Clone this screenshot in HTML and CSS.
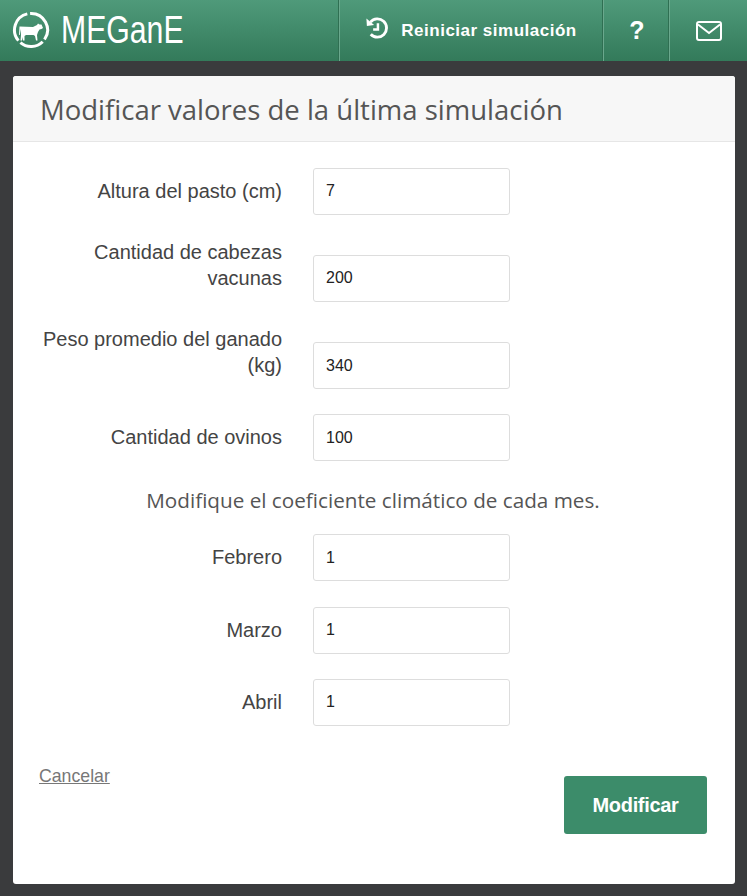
FILE: index.html
```html
<!DOCTYPE html>
<html lang="es">
<head>
<meta charset="utf-8">
<title>MEGanE</title>
<link rel="stylesheet" href="styles.css">
</head>
<body>
<header class="topbar">
  <a class="brand" href="#">
    <svg class="brand-icon" viewBox="0 0 38 38" aria-hidden="true">
      <g fill="none" stroke="#fff" stroke-width="3">
        <path d="M18.1 2.5A16.5 16.5 0 0 1 32.5 28.5"/>
        <path d="M30.7 30.7A16.5 16.5 0 0 1 8.4 31.6"/>
        <path d="M6.4 29.6A16.5 16.5 0 0 1 15.3 2.9"/>
      </g>
      <path fill="#fff" d="M7.5 15.5 21 16 25 14 26 12.5 27.5 13.5 29.5 13.5 31 17 29.5 18 27.5 18.5 26 21 25 24 25.5 29.5 24 29.5 23 25 21.5 24 14 24 12.5 25 12.5 29.5 11 29.5 10.5 26 10 29.5 8.5 29.5 9 24 8.5 18 7.8 24 7 24z"/>
    </svg>
    <span class="brand-name">MEGanE</span>
  </a>
  <nav class="topnav">
    <a class="nav-item nav-restart" href="#">
      <svg class="icon-history" viewBox="0 0 24 24" aria-hidden="true">
        <path d="M5.7 6.4A9.5 9.5 0 1 1 6 19" fill="none" stroke="#fff" stroke-width="3"/>
        <path d="M1.5 2.5 2 10.5 9.5 9.5z" fill="#fff"/>
        <path d="M13.5 7.5v6.5H8.5" fill="none" stroke="#fff" stroke-width="2.6"/>
      </svg>
      <span>Reiniciar simulación</span>
    </a>
    <a class="nav-item nav-help" href="#">?</a>
    <a class="nav-item nav-mail" href="#" aria-label="Contacto">
      <svg class="icon-mail" viewBox="0 0 26 20" aria-hidden="true">
        <rect x="1" y="1" width="24" height="18" rx="2" fill="none" stroke="#fff" stroke-width="2"/>
        <path d="M2 3.5 13 12 24 3.5" fill="none" stroke="#fff" stroke-width="2"/>
      </svg>
    </a>
  </nav>
</header>

<main class="card">
  <h1 class="card-title">Modificar valores de la última simulación</h1>
  <form class="card-body">
    <div class="field"><label class="field-label">Altura del pasto (cm)</label><input class="field-input" value="7"></div>
    <div class="field"><label class="field-label">Cantidad de cabezas vacunas</label><input class="field-input" value="200"></div>
    <div class="field"><label class="field-label">Peso promedio del ganado (kg)</label><input class="field-input" value="340"></div>
    <div class="field"><label class="field-label">Cantidad de ovinos</label><input class="field-input" value="100"></div>
    <p class="hint">Modifique el coeficiente climático de cada mes.</p>
    <div class="field"><label class="field-label">Febrero</label><input class="field-input" value="1"></div>
    <div class="field"><label class="field-label">Marzo</label><input class="field-input" value="1"></div>
    <div class="field"><label class="field-label">Abril</label><input class="field-input" value="1"></div>
    <div class="actions">
      <a class="cancel" href="#">Cancelar</a>
      <button class="submit" type="button">Modificar</button>
    </div>
  </form>
</main>
</body>
</html>
```
FILE: styles.css
```css
* { box-sizing: border-box; }
html, body { height: 100%; }
body {
  margin: 0;
  background: #3a3b3d;
  font-family: "Liberation Sans", Arial, sans-serif;
  color: #444;
  overflow: hidden;
}
.topbar {
  display: flex;
  justify-content: space-between;
  height: 61px;
  background: linear-gradient(#4f9a7a, #337a5a);
}
.brand {
  display: flex;
  align-items: center;
  gap: 11px;
  padding: 0 0 2px 12px;
  color: #fff;
  text-decoration: none;
}
.brand-icon { width: 38px; height: 38px; }
.brand-name {
  font-size: 38px;
  line-height: 1;
  transform: scaleX(.795);
  transform-origin: left center;
}
.topnav { display: flex; }
.nav-item {
  display: flex;
  align-items: center;
  justify-content: center;
  height: 61px;
  color: #fff;
  text-decoration: none;
  font-weight: 700;
  border-left: 1px solid #2f6f52;
  box-shadow: inset 1px 0 0 #6aa88d;
}
.nav-restart {
  width: 264px;
  gap: 13px;
  padding-left: 1px;
  font-size: 17px;
  letter-spacing: .5px;
}
.nav-help { width: 66px; padding-left: 3px; font-size: 25px; }
.nav-mail { width: 79px; padding-left: 2px; }
.icon-history { width: 23px; height: 23px; margin-top: -6px; }
.icon-mail { width: 26px; height: 20px; }
.card {
  margin: 15px 12px 0 13px;
  height: 808px;
  background: #fff;
  border-radius: 3px;
  overflow: hidden;
}
.card-title {
  margin: 0;
  height: 66px;
  padding: 0 27px;
  background: #f7f7f7;
  border-bottom: 1px solid #e6e6e6;
  font-family: "Open Sans", sans-serif;
  font-size: 27.5px;
  font-weight: 400;
  line-height: 68px;
  color: #555;
}
.card-body {
  display: flex;
  flex-direction: column;
  padding: 25.8px 0 0 0;
}
.field {
  display: flex;
  align-items: flex-end;
  margin-bottom: 25.2px;
}
.field-label {
  width: 269px;
  margin-top: -1px;
  padding: 0 0 11px 26px;
  text-align: right;
  font-size: 20px;
  line-height: 26px;
  color: #444;
}
.field-input {
  width: 197px;
  height: 47px;
  margin-left: 31px;
  padding: 0 12px;
  border: 1px solid #ddd;
  border-radius: 3px;
  background: #fff;
  font-family: "Liberation Sans", sans-serif;
  font-size: 16px;
  color: #222;
}
.hint {
  margin: .6px 0 21.2px;
  padding-right: 2px;
  text-align: center;
  font-family: "Open Sans", sans-serif;
  font-size: 20.7px;
  line-height: 26px;
  color: #555;
}
.actions {
  display: flex;
  justify-content: space-between;
  align-items: flex-start;
  padding: 0 28px 0 26px;
}
.cancel {
  font-size: 17.7px;
  line-height: 20px;
  color: #777;
  margin-top: 15px;
}
.submit {
  width: 143px;
  height: 58px;
  margin-top: 25px;
  padding: 2px 0 0;
  border: 0;
  border-radius: 3px;
  background: #3c8c6a;
  color: #fff;
  font-family: "Liberation Sans", sans-serif;
  font-size: 20px;
  font-weight: 700;
  letter-spacing: -.33px;
}
```
